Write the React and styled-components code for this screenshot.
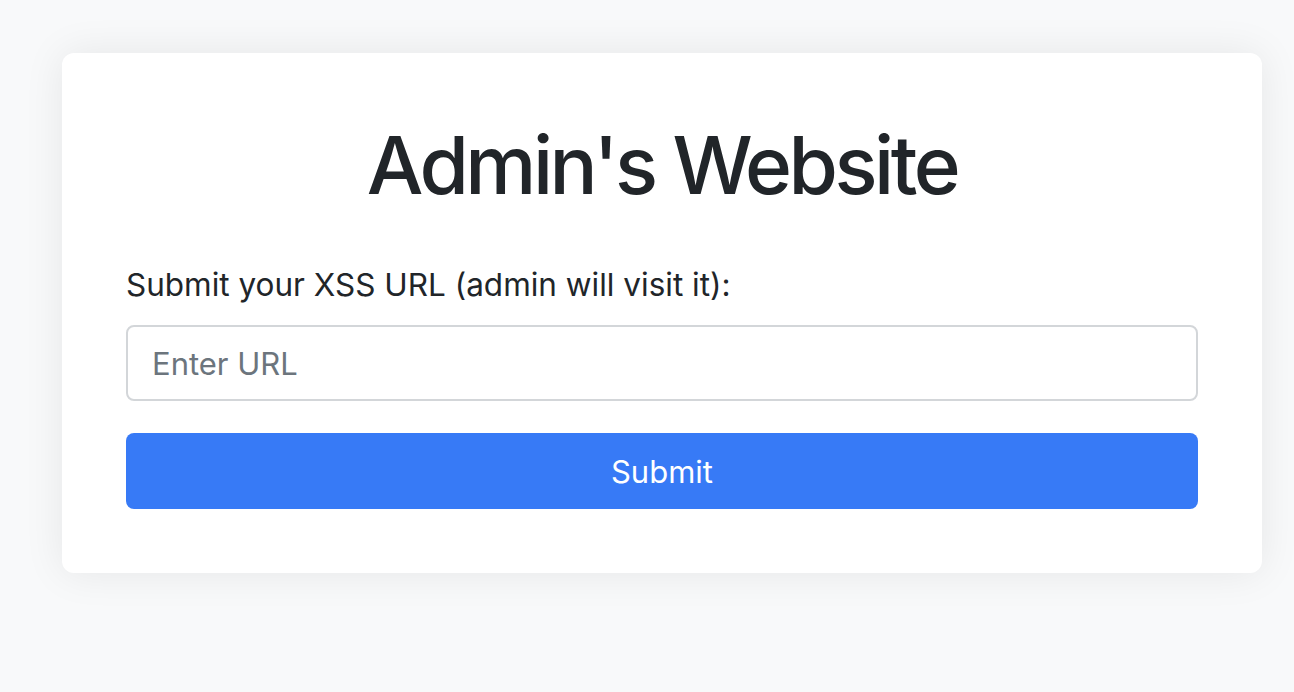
import React from 'react'
import styled, { createGlobalStyle } from 'styled-components'

const GlobalStyle = createGlobalStyle`
  html, body {
    margin: 0;
    padding: 0;
    background: #f8f9fa;
    font-family: Inter, "Noto Sans", "Liberation Sans", sans-serif;
    color: #212529;
  }
  * { box-sizing: border-box; }
`

const Page = styled.div`
  min-height: 692px;
  padding: 53px 0 0 62px;
`

const Card = styled.div`
  width: 1200px;
  background: #fff;
  border-radius: 12px;
  box-shadow: 0 0 40px rgba(0, 0, 0, 0.08);
  padding: 64px;
`

const Title = styled.h1`
  margin: 0 0 48px;
  font-size: 80px;
  font-weight: 500;
  line-height: 1.2;
  letter-spacing: -3.5px;
  text-align: center;
  color: #212529;
`

const Label = styled.label`
  display: block;
  margin-bottom: 16px;
  font-size: 31.5px;
  line-height: 48px;
  color: #212529;
`

const UrlInput = styled.input`
  display: block;
  width: 100%;
  height: 76px;
  margin-bottom: 32px;
  padding: 12px 24px;
  border: 2px solid #d3d6d9;
  border-radius: 8px;
  font-family: inherit;
  font-size: 31px;
  color: #212529;
  outline: none;

  &::placeholder {
    color: #6c757d;
  }
`

const SubmitButton = styled.button`
  display: block;
  width: 100%;
  height: 76px;
  border: none;
  border-radius: 8px;
  background: #377af6;
  color: #fff;
  font-family: inherit;
  font-size: 31px;
  cursor: pointer;
`

export default function App() {
  return (
    <Page>
      <GlobalStyle />
      <Card>
        <Title>Admin's Website</Title>
        <form onSubmit={(e) => e.preventDefault()}>
          <Label htmlFor="url">Submit your XSS URL (admin will visit it):</Label>
          <UrlInput id="url" type="text" placeholder="Enter URL" />
          <SubmitButton type="submit">Submit</SubmitButton>
        </form>
      </Card>
    </Page>
  )
}
